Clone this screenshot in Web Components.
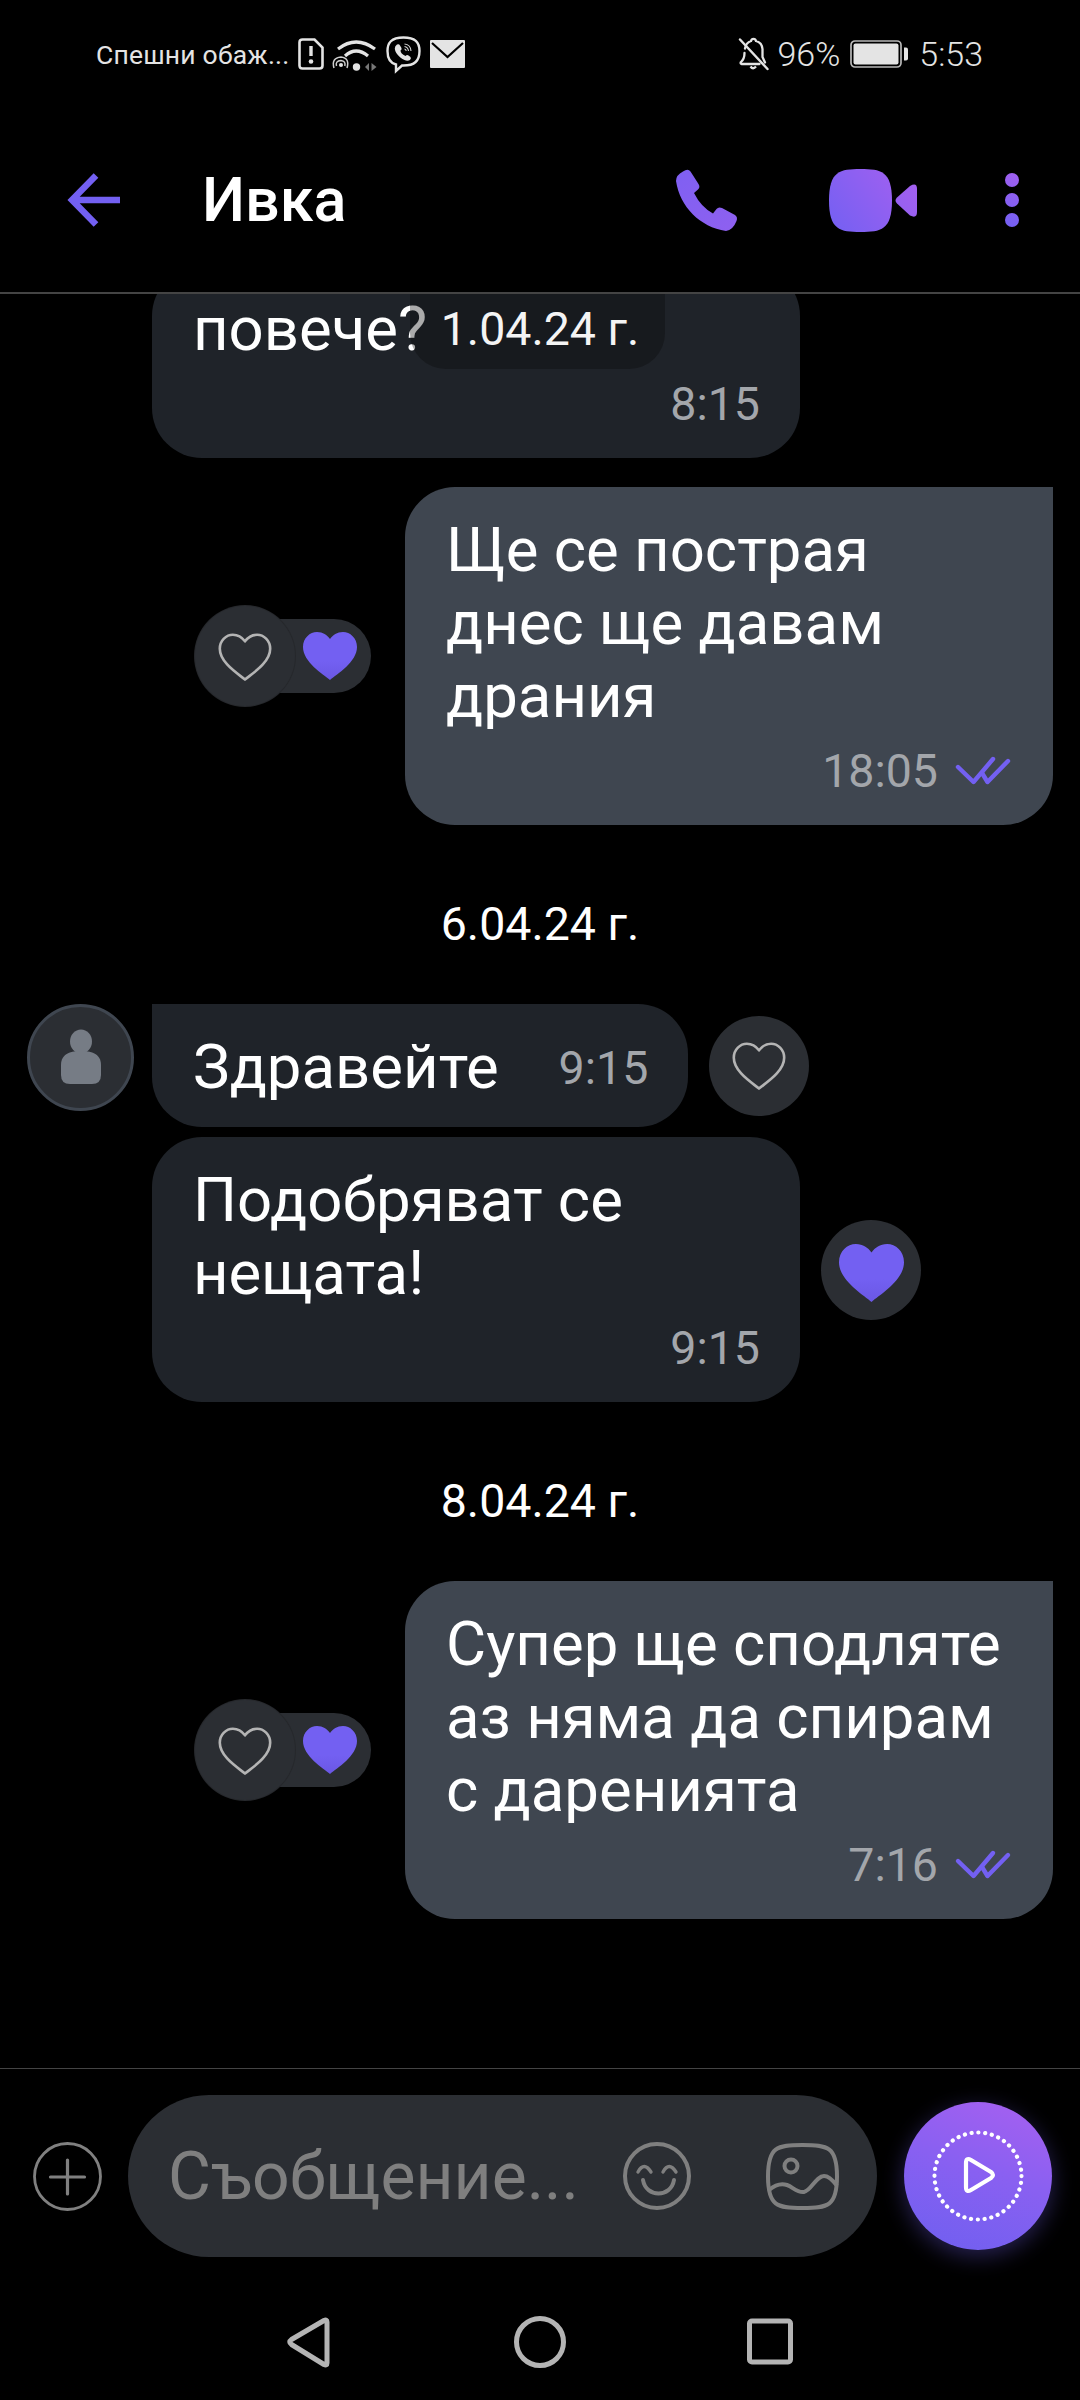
<!DOCTYPE html>
<html lang="bg"><head><meta charset="utf-8"><title>Ивка</title>
<style>
html,body{margin:0;padding:0;background:#000}
body{font-family:Roboto,"Noto Sans",sans-serif;color:#fff}
</style></head><body>
<app-shell>
  <status-bar slot="status"></status-bar>
  <chat-header slot="header" title="Ивка"></chat-header>

  <chat-row side="in" spacer clip>
    <chat-bubble side="in" wide><span>повече?</span><span slot="time">8:15</span></chat-bubble>
  </chat-row>
  <date-pill floating>1.04.24 г.</date-pill>

  <chat-row side="out" gap="29">
    <reaction-group slot="before"></reaction-group>
    <chat-bubble side="out" wide read><span>Ще се пострая днес ще давам драния</span><span slot="time">18:05</span></chat-bubble>
  </chat-row>

  <date-pill>6.04.24 г.</date-pill>

  <chat-row side="in">
    <avatar-circle slot="avatar"></avatar-circle>
    <chat-bubble side="in" first inline><span>Здравейте</span><span slot="time">9:15</span></chat-bubble>
    <reaction-circle></reaction-circle>
  </chat-row>
  <chat-row side="in" spacer gap="10">
    <chat-bubble side="in" wide><span>Подобряват се нещата!</span><span slot="time">9:15</span></chat-bubble>
    <reaction-circle filled></reaction-circle>
  </chat-row>

  <date-pill>8.04.24 г.</date-pill>

  <chat-row side="out">
    <reaction-group slot="before"></reaction-group>
    <chat-bubble side="out" wide read><span>Супер ще сподляте аз няма да спирам с даренията</span><span slot="time">7:16</span></chat-bubble>
  </chat-row>

  <composer-bar slot="composer"></composer-bar>
  <nav-bar slot="nav"></nav-bar>
</app-shell>

<script>
const HEART='M27 48C20 42 0 30 0 15C0 6 7 0 14 0C20 0 24 3 27 7C30 3 34 0 40 0C47 0 54 6 54 15C54 30 34 42 27 48Z';
const ICONS={
 back:[54,54,'<path d="M53 27H5M29 2.500L5 27 29 51.500" fill="none" stroke="#7360f2" stroke-width="6.500" stroke-linejoin="miter"/>'],
 phone:[62,62,'<defs><linearGradient id="g" gradientUnits="userSpaceOnUse" x1="0" y1="0" x2="62" y2="62"><stop offset="0" stop-color="#7f60f2"/><stop offset="1" stop-color="#8f60f0"/></linearGradient></defs><path fill="url(#g)" d="M7 2.500Q12 -1 14.500 2.500L22.500 15Q24.500 18 22 20.500L18 24Q25 38 37 44.500L40.500 40Q42.500 37.500 46 39L59 46Q62 48 60.500 52Q57 61 50 62C24 58 4 38 0 12Q0 6 7 2.500Z"/>'],
 video:[88,63,'<defs><linearGradient id="g" gradientUnits="userSpaceOnUse" x1="0" y1="63" x2="88" y2="0"><stop offset="0" stop-color="#7360f2"/><stop offset="1" stop-color="#a860f0"/></linearGradient></defs><path fill="url(#g)" d="M31.500 0C52 0 63 2 63 31.500C63 61 52 63 31.500 63C11 63 0 61 0 31.500C0 2 11 0 31.500 0Z"/><path fill="url(#g)" d="M68 28.500L81 17Q88 13 88 20V43Q88 50 81 46.500L68 34.500Q65 31.500 68 28.500Z"/>'],
 dots:[14,54,'<defs><linearGradient id="g" gradientUnits="userSpaceOnUse" x1="0" y1="54" x2="14" y2="0"><stop offset="0" stop-color="#7360f2"/><stop offset="1" stop-color="#a060f0"/></linearGradient></defs><circle cx="7" cy="7" r="7" fill="url(#g)"/><circle cx="7" cy="27" r="7" fill="url(#g)"/><circle cx="7" cy="47" r="7" fill="url(#g)"/>'],
 sim:[26,32,'<path d="M4.500 1.500H16.500L24.500 9.500V27.500Q24.500 30.500 21.500 30.500H4.500Q1.500 30.500 1.500 27.500V4.500Q1.500 1.500 4.500 1.500Z" fill="none" stroke="#e4e4e4" stroke-width="2.600"/><path d="M13 8V18" stroke="#e4e4e4" stroke-width="3.400"/><circle cx="13" cy="23.500" r="2.300" fill="#e4e4e4"/>'],
 wifi:[46,33,'<g fill="none" stroke="#e4e4e4" stroke-linecap="butt"><path d="M6 11Q24 -3 43 11" stroke-width="3.200"/><path d="M13 18Q24 8 36 18" stroke-width="3.200"/></g><circle cx="24.500" cy="29" r="3.700" fill="#e4e4e4"/><g fill="none" stroke="#cfcfcf" stroke-width="1.500"><path d="M2 30Q-1 20 9 19Q18 20 15 30"/><path d="M4.500 28Q3 23 9 22.500Q14 23 12.800 28"/></g><circle cx="9" cy="27" r="2" fill="#e4e4e4"/><path d="M37 25V33L33 29ZM39.500 25V33L44.500 29Z" fill="#777"/>'],
 viber:[35,37,'<path d="M17.500 1.500C5 1.500 1.500 7 1.500 15C1.500 23 4 27 10 28.500V35L16 29.500C29 30 33.500 24.500 33.500 15C33.500 6 29 1.500 17.500 1.500Z" fill="none" stroke="#e4e4e4" stroke-width="2.400"/><path d="M11 8.500Q13 7.500 14 9.500L15.500 12Q16 13.500 14.500 14.500Q14.500 17.500 19.500 20Q21 18.500 22.500 19.500L24.500 21Q25.500 22.500 24 24Q21.500 25.500 18.500 24C13 21.500 9 16.500 8.800 12.500Q8.800 10 11 8.500Z" fill="#e4e4e4"/><g fill="none" stroke="#cfcfcf" stroke-width="1.100"><path d="M18.500 8Q24.500 8.500 25 15"/><path d="M18.500 10.500Q22 11 22.500 15"/><path d="M18.500 13Q20 13.300 20.200 15"/></g>'],
 mail:[35,28,'<path d="M1 0H34Q35 0 35 1V27Q35 28 34 28H1Q0 28 0 27V1Q0 0 1 0Z" fill="#e4e4e4"/><path d="M2 3L17.500 17L33 3" fill="none" stroke="#000" stroke-width="2.200"/>'],
 bell:[31,33,'<path d="M7 10.500Q8 4.500 13 3Q13.500 0.800 15.500 0.800Q17.500 0.800 18 3Q24 4.500 24.500 11V19L27 24.500M21.500 26H3.500Q2 25.500 3 24Q6.500 21 6.500 15" fill="none" stroke="#e4e4e4" stroke-width="2.300" stroke-linecap="round"/><path d="M12.500 28.500Q15 32 18 28.500" fill="none" stroke="#e4e4e4" stroke-width="2.300"/><path d="M2 1.500L29.500 31" stroke="#e4e4e4" stroke-width="2.400" stroke-linecap="round"/>'],
 battery:[58,28,'<rect x="1" y="1" width="50" height="26" rx="4" fill="none" stroke="#b8b8b8" stroke-width="1.700"/><rect x="3.500" y="3.500" width="45" height="21" rx="2" fill="#e4e4e4"/><path d="M54 7.500H56Q58 7.500 58 9.500V18.500Q58 20.500 56 20.500H54Z" fill="#e4e4e4"/>'],
 plus:[69,69,'<g fill="none" stroke="#808080"><circle cx="34.500" cy="34.500" r="33" stroke-width="2.800"/><path d="M17.500 35H51.500M34.500 18V52" stroke-width="3.200" stroke-linecap="round"/></g>'],
 smile:[68,68,'<g fill="none" stroke="#7f7f7f" stroke-width="4" stroke-linecap="round"><circle cx="34" cy="34" r="32"/><path d="M15 30Q21 19 28 30M40 30Q46 19 53 30" stroke-width="3.400"/><path d="M20 38C23 56 48 56 51 38"/></g>'],
 image:[73,67,'<g fill="none" stroke="#7f7f7f" stroke-width="4" stroke-linejoin="round"><path d="M36.500 2C62 2 71 4 71 33.500C71 63 62 65 36.500 65C11 65 2 63 2 33.500C2 4 11 2 36.500 2Z"/><circle cx="25" cy="23" r="6.500"/><path d="M3 47C9 42 15 40 21 42C27 44 31 50 38 49C45 48 50 33 58 33C64 33 68 39 71 43"/></g>'],
 play:[92,92,'<circle cx="46" cy="46" r="43.500" fill="none" stroke="#fff" stroke-width="4.200" stroke-dasharray="0.100 6.733" stroke-linecap="round"/><path d="M34 33Q34 27 39 30L59 42Q63 45 59 48L39 60Q34 63 34 57Z" fill="none" stroke="#fff" stroke-width="4.200" stroke-linejoin="round"/>'],
 navback:[60,60,'<path d="M47 10V51Q47 54 44 52.500L11.500 32.500Q8 30 11.500 27.500L44 8.500Q47 7 47 10Z" fill="none" stroke="#b4b4b4" stroke-width="5" stroke-linejoin="round"/>'],
 navhome:[60,60,'<circle cx="30" cy="30" r="23.500" fill="none" stroke="#b4b4b4" stroke-width="5"/>'],
 navsq:[60,60,'<rect x="9.500" y="9" width="41" height="41" rx="2.500" fill="none" stroke="#b4b4b4" stroke-width="5"/>'],
 check:[56,30,'<g fill="none" stroke="#7360f2" stroke-width="4.400" stroke-linecap="round" stroke-linejoin="round"><path d="M3 11L18.500 26L38 3"/><path d="M27 17L32.500 26L53 5"/></g>'],
 person:[46,58,'<ellipse cx="23" cy="12.500" rx="11" ry="12" fill="#767c85"/><path d="M23 22C32 22 43 24 43 36V46Q43 55 34 55H12Q3 55 3 46V36C3 24 14 22 23 22Z" fill="#767c85"/>'],
 heartOutline:[54,47,'<path transform="translate(1.800 1.800) scale(.933)" d="'+HEART+'" fill="none" stroke="#b4b4b4" stroke-width="2.800" stroke-linejoin="round"/>'],
 heart:[54,48,'<defs><linearGradient id="g" x1="0" y1="0" x2="0" y2="1"><stop offset=".6" stop-color="#7360f2"/><stop offset="1" stop-color="#6a57e4"/></linearGradient></defs><path fill="url(#g)" d="'+HEART+'"/>']
};
class UiIcon extends HTMLElement{
  connectedCallback(){
    if(this.shadowRoot)return;
    const [w,h,body]=ICONS[this.getAttribute('name')];
    const rw=this.getAttribute('w')||w,rh=this.getAttribute('h')||h;
    this.attachShadow({mode:'open'}).innerHTML=`<style>:host{display:inline-flex;flex:none;width:${rw}px;height:${rh}px}svg{display:block;overflow:visible}</style><svg width="${rw}" height="${rh}" viewBox="0 0 ${w} ${h}">${body}</svg>`;
  }
}
customElements.define('ui-icon',UiIcon);

function def(tag,html,setup){
  customElements.define(tag,class extends HTMLElement{
    constructor(){super();this.attachShadow({mode:'open'}).innerHTML=html;}
    connectedCallback(){if(setup)setup(this);}
  });
}

def('app-shell',`<style>
:host{display:flex;flex-direction:column;width:1080px;height:2400px;background:#000;overflow:hidden}
.chat{flex:1;min-height:0;overflow:hidden;position:relative;display:flex;flex-direction:column}
</style>
<slot name="status"></slot><slot name="header"></slot>
<div class="chat"><slot></slot></div>
<slot name="composer"></slot><slot name="nav"></slot>`);

def('status-bar',`<style>
:host{display:flex;align-items:center;height:108px;padding:0 97px 0 96px;box-sizing:border-box;color:#e4e4e4;font-family:Roboto,sans-serif}
.l{font-size:26.500px;letter-spacing:.2px;margin-right:9px;white-space:nowrap}
.r{margin-left:auto;display:flex;align-items:center;font-size:34px;font-weight:300}
ui-icon{margin-right:8px}
</style>
<span class="l">Спешни обаж...</span>
<ui-icon name="sim"></ui-icon><ui-icon name="wifi"></ui-icon><ui-icon name="viber" style="margin-right:9px"></ui-icon><ui-icon name="mail"></ui-icon>
<div class="r"><ui-icon name="bell"></ui-icon><span style="margin-right:10px">96%</span><ui-icon name="battery" style="margin-right:11px"></ui-icon><span>5:53</span></div>`);

def('chat-header',`<style>
:host{display:flex;align-items:center;height:186px;box-sizing:border-box;border-bottom:2px solid #444;padding:0 61px 0 67px}
.t{font:500 61px Roboto,sans-serif;color:#fff;margin-left:81px;flex:1}
.p{margin-right:91px}.v{margin-right:88px}
</style>
<ui-icon name="back"></ui-icon><span class="t"></span>
<ui-icon class="p" name="phone"></ui-icon><ui-icon class="v" name="video"></ui-icon><ui-icon name="dots"></ui-icon>`,
 el=>{el.shadowRoot.querySelector('.t').textContent=el.getAttribute('title');el.removeAttribute('title');});

def('chat-row',`<style>
:host{display:flex;align-items:center;flex:none;box-sizing:border-box;padding:0 27px}
:host([side=in]){justify-content:flex-start}
:host([side=out]){justify-content:flex-end}
:host([spacer]){padding-left:152px}
:host([clip]){margin-top:-28px}
:host([gap="29"]){margin-top:29px}
:host([gap="10"]){margin-top:10px}
::slotted(avatar-circle){margin-right:18px;align-self:flex-start}
::slotted(reaction-group){margin-right:34px}
::slotted(reaction-circle){margin-left:21px}
</style><slot name="avatar"></slot><slot name="before"></slot><slot></slot>`);

def('chat-bubble',`<style>
:host{display:block;flex:none;box-sizing:border-box;padding:27px 42px 26px 41px;border-radius:50px;font:400 61.700px/73px Roboto,sans-serif;color:#fff;background:#1f2329}
:host([wide]){width:648px}
:host([side=out]){background:#3f4650;border-top-right-radius:0}
:host([first]){border-top-left-radius:0;padding-bottom:23px}
:host([inline]) .wrap{display:flex;align-items:center;gap:60px}
.time{display:flex;justify-content:flex-end;align-items:center;gap:17px;margin-top:10px;font-size:46.500px;line-height:56px;color:#a3a6ab}
:host([inline]) .time{margin:0}
:host([inline]){padding-right:40px}
ui-icon{display:none}
:host([read]) ui-icon{display:inline-flex}
:host([side=in][wide]) .time{margin-right:-2px}
</style><div class="wrap"><div><slot></slot></div><div class="time"><slot name="time"></slot><ui-icon name="check"></ui-icon></div></div>`);

def('date-pill',`<style>
:host{display:flex;flex:none;box-sizing:border-box;justify-content:center;align-items:center;height:179px;padding-top:18px;font:400 46.500px Roboto,sans-serif;color:#fff}
:host([floating]){position:absolute;top:0;left:410px;width:255px;height:75px;padding:0 0 6px 5px;border-radius:0 0 36px 36px;background:rgba(8,8,10,.34);color:#f4f4f4}
</style><slot></slot>`);

def('avatar-circle',`<style>
:host{display:flex;flex:none;width:107px;height:107px;box-sizing:border-box;border-radius:50%;background:#2b2e33;border:3px solid #3f4650;align-items:center;justify-content:center}
</style><ui-icon name="person"></ui-icon>`);

def('reaction-circle',`<style>
:host{display:flex;flex:none;width:100px;height:100px;border-radius:50%;background:#2b2e33;align-items:center;justify-content:center}
#h{display:flex}
#h.f{margin-top:7px}
</style><span id="h"></span>`,el=>{
  const s=el.shadowRoot.getElementById('h');
  if(el.hasAttribute('filled')){s.className='f';s.innerHTML='<ui-icon name="heart" w="65" h="58"></ui-icon>';}
  else s.innerHTML='<ui-icon name="heartOutline"></ui-icon>';
});

def('reaction-group',`<style>
:host{display:flex;flex:none;align-items:center}
.c{position:relative;z-index:1;width:100px;height:100px;border-radius:50%;background:#2b2e33;display:flex;align-items:center;justify-content:center;box-shadow:0 0 0 1px #26282c}
.p{margin-left:-45px;height:74px;width:121px;box-sizing:border-box;padding-left:53px;border-radius:0 37px 37px 0;background:#2b2e33;display:flex;align-items:center}
</style><div class="c"><ui-icon name="heartOutline"></ui-icon></div><div class="p"><ui-icon name="heart"></ui-icon></div>`);

def('composer-bar',`<style>
:host{display:flex;align-items:center;height:215px;box-sizing:border-box;border-top:1px solid #444;padding:0 27px 0 33px}
.pill{margin-left:26px;width:749px;height:162px;box-sizing:border-box;border-radius:81px;background:#2b2e33;display:flex;align-items:center;padding:0 38px 0 40px}
.ph{flex:1;font:400 66px Roboto,sans-serif;color:#7f7f7f;white-space:nowrap}
.s{margin-right:75px}
.send{margin-left:27px;width:148px;height:148px;border-radius:50%;background:linear-gradient(200deg,#a860f0 0%,#8a60f1 45%,#6e5ff0 100%);box-shadow:0 6px 22px rgba(115,96,242,.35);display:flex;align-items:center;justify-content:center}
</style>
<ui-icon name="plus"></ui-icon>
<div class="pill"><span class="ph">Съобщение...</span><ui-icon class="s" name="smile"></ui-icon><ui-icon name="image"></ui-icon></div>
<div class="send"><ui-icon name="play"></ui-icon></div>`);

def('nav-bar',`<style>
:host{display:flex;align-items:center;justify-content:center;gap:170px;height:117px}
</style><ui-icon name="navback"></ui-icon><ui-icon name="navhome"></ui-icon><ui-icon name="navsq"></ui-icon>`);
</script>
</body></html>
